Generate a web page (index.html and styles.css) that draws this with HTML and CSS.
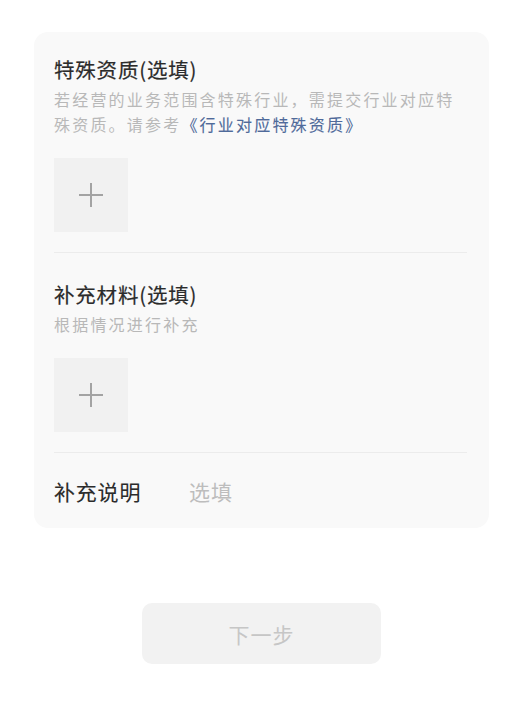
FILE: index.html
```html
<!DOCTYPE html>
<html lang="zh-CN">
<head>
<meta charset="utf-8">
<link rel="stylesheet" href="styles.css">
</head>
<body>
<div class="page">
  <div class="card">
    <div class="section">
      <div class="title">特殊资质(选填)</div>
      <div class="desc">若经营的业务范围含特殊行业，需提交行业对应特殊资质。请参考<span class="link">《行业对应特殊资质》</span></div>
      <div class="upload"><span class="plus"></span></div>
    </div>
    <div class="section">
      <div class="title">补充材料(选填)</div>
      <div class="desc">根据情况进行补充</div>
      <div class="upload"><span class="plus"></span></div>
    </div>
    <div class="row">
      <span class="label">补充说明</span>
      <span class="placeholder">选填</span>
    </div>
  </div>
  <div class="actions">
    <div class="btn">下一步</div>
  </div>
</div>
</body>
</html>
```
FILE: styles.css
```css
html, body {
  margin: 0;
  padding: 0;
  background: #ffffff;
}
body {
  font-family: "Noto Sans CJK SC", "Noto Sans", sans-serif;
}
.page {
  padding: 32px 0 0 34px;
}
.card {
  width: 455px;
  box-sizing: border-box;
  background: #f9f9f9;
  border-radius: 14px;
  padding: 0 22px 0 20px;
}
.section {
  padding: 23px 0 20px;
  border-bottom: 1px solid #ececec;
}
.section + .section {
  padding-top: 27px;
}
.title {
  font-size: 20.5px;
  line-height: 28px;
  font-weight: 400;
  -webkit-text-stroke: 0.2px #2b2b2b;
  color: #2b2b2b;
  letter-spacing: 0.8px;
}
.desc {
  margin-top: 4px;
  font-size: 16px;
  line-height: 25px;
  color: #b8b8b8;
  letter-spacing: 2.2px;
}
.link {
  color: #4f6a9a;
  -webkit-text-stroke: 0.1px #4f6a9a;
}
.upload {
  margin-top: 21px;
  width: 74px;
  height: 74px;
  background: #f1f1f1;
  display: flex;
  align-items: center;
  justify-content: center;
}
.plus {
  position: relative;
  width: 24px;
  height: 24px;
}
.plus::before,
.plus::after {
  content: "";
  position: absolute;
  background: #a3a3a3;
}
.plus::before {
  left: 0;
  right: 0;
  top: 11px;
  height: 1.6px;
}
.plus::after {
  top: 0;
  bottom: 0;
  left: 11px;
  width: 1.6px;
}
.row {
  height: 75px;
  display: flex;
  align-items: center;
}
.label {
  font-size: 21px;
  color: #2b2b2b;
  -webkit-text-stroke: 0.1px #2b2b2b;
  width: 135px;
  letter-spacing: 0.8px;
}
.placeholder {
  font-size: 21px;
  color: #bdbdbd;
  letter-spacing: 1px;
}
.actions {
  width: 455px;
  display: flex;
  justify-content: center;
  padding-top: 75px;
}
.btn {
  width: 239px;
  height: 61px;
  border-radius: 10px;
  background: #f2f2f2;
  color: #c6c6c6;
  font-size: 21px;
  display: flex;
  align-items: center;
  justify-content: center;
  letter-spacing: 1px;
}
```
